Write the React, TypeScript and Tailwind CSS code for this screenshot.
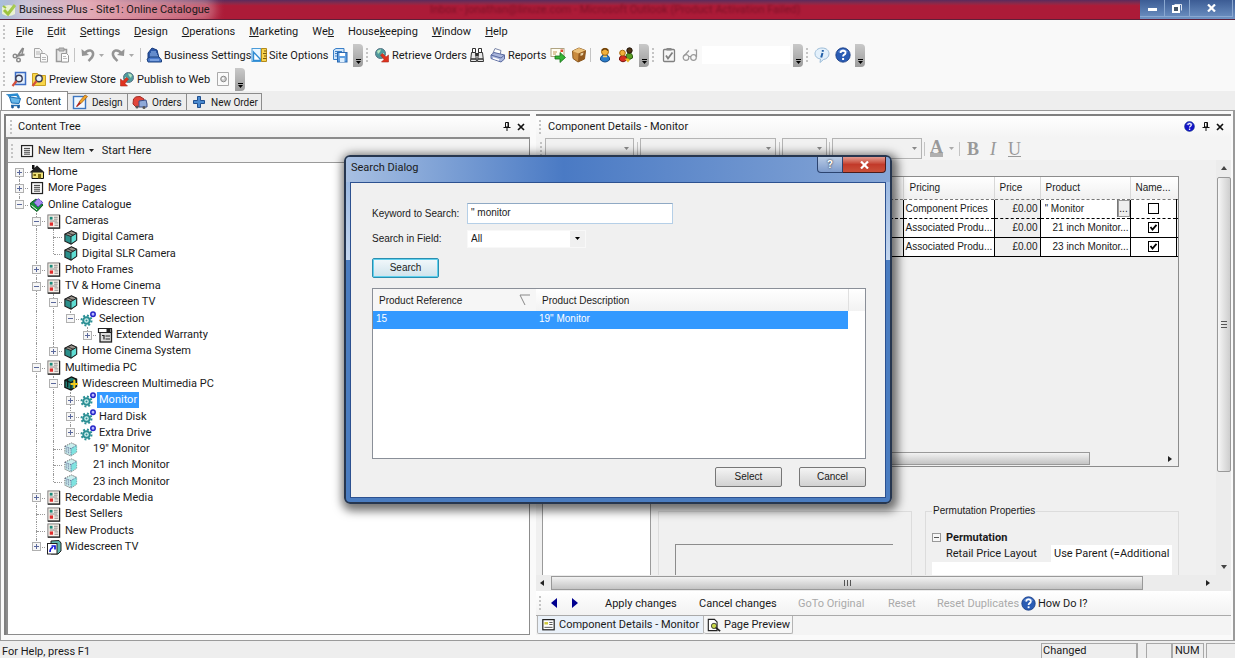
import type { ReactNode } from 'react';
import clsx from 'clsx';

const UI = 'font-["Roboto","Noto_Sans",sans-serif]';
const CLASSIC = 'font-["Liberation_Sans",Arial,sans-serif]';

/* ---------- icons ---------- */

const Svg = ({ children, size = 16, className }: { children: ReactNode; size?: number; className?: string }) => (
    <svg width={size} height={size} viewBox="0 0 16 16" fill="none" className={clsx('shrink-0', className)} aria-hidden="true">
        {children}
    </svg>
);

const CutIcon = () => (
    <Svg>
        <path d="M12 1 L6 10 M13.5 7.5 L5 9" stroke="#8a8a8a" strokeWidth="2" />
        <circle cx="4" cy="9" r="1.8" stroke="#8a8a8a" strokeWidth="1.4" />
        <circle cx="7.5" cy="13" r="1.8" stroke="#8a8a8a" strokeWidth="1.4" />
        <path d="M12.5 1 L10.5 9" stroke="#8a8a8a" strokeWidth="1.4" />
    </Svg>
);

const CopyIcon = () => (
    <Svg>
        <path d="M1.500 1.500h5l2.500 2.500v6.500h-7.500z" fill="#f4f4f4" stroke="#a5a5a5" />
        <path d="M3 5h4M3 7h4" stroke="#b5b5b5" />
        <path d="M7.500 6.500h4.500l2.500 2.500v6h-7z" fill="#fafafa" stroke="#a5a5a5" />
        <path d="M9 10.500h4M9 12.500h4" stroke="#b5b5b5" />
    </Svg>
);

const PasteIcon = () => (
    <Svg>
        <path d="M2.500 2.500h10v12h-10z" fill="#e8e8e8" stroke="#999" strokeWidth="1.500" />
        <path d="M5 1h5v3h-5z" fill="#bbb" stroke="#999" />
        <path d="M7.500 6.500h5l2 2v6.500h-7z" fill="#fcfcfc" stroke="#999" />
        <path d="M9 9.500h3M9 11.500h4" stroke="#bbb" />
    </Svg>
);

const UndoIcon = ({ flip }: { flip?: boolean }) => (
    <Svg className={flip ? '-scale-x-100' : ''}>
        <path d="M4 7 C8 1.500 14 3 13 8 C12.600 10.500 10.500 12 8.500 14" stroke="#959595" strokeWidth="2.600" />
        <path d="M1.500 2 L2 9 L9 8z" fill="#959595" />
    </Svg>
);

const BusinessIcon = () => (
    <Svg>
        <path d="M2 11 V6 L6 1 L11 3 L13 11z" fill="#2c58a8" stroke="#163a7c" />
        <path d="M5 5h5M4 7h7M4 9h8" stroke="#9cc0f0" />
        <path d="M1 12 L4 10 H13 L15.500 13 V15 H2z" fill="#4a7acb" stroke="#1d427f" />
        <path d="M4 13h9" stroke="#a8c6f4" />
    </Svg>
);

const SiteOptionsIcon = () => (
    <Svg>
        <rect x="1" y="1.500" width="9" height="13" fill="#eaf6ff" stroke="#4a9bd8" />
        <path d="M2.500 5 V13.500 H10.500z" fill="#fff" stroke="#2f8cd4" strokeWidth="1.400" />
        <path d="M10.500 1.500h5v13h-5z" fill="#f7d34c" stroke="#b38a1c" />
        <path d="M13 4h2.500M12 6.500h3.500M13 9h2.500M12 11.500h3.500" stroke="#7a5a0a" />
    </Svg>
);

const SaveAllIcon = () => (
    <Svg>
        <path d="M1.500 3 L4 1.500 H12 V12.500 H1.500z" fill="#cfe5fa" stroke="#3a7fc8" />
        <path d="M3 4.500h7M3 6.500h3M3 9h2" stroke="#3a7fc8" />
        <rect x="5.500" y="5.500" width="9.500" height="9.500" fill="#5e9ee0" stroke="#2a68b0" />
        <rect x="7.500" y="6" width="5.500" height="3" fill="#fff" />
        <rect x="8" y="11" width="4.500" height="4" fill="#dceefe" />
    </Svg>
);

const GlobeArrowIcon = ({ mirror }: { mirror?: boolean }) => (
    <Svg className={mirror ? '-scale-x-100' : ''}>
        <circle cx="6.500" cy="6.500" r="5" fill="#4f9a9c" stroke="#5a7688" />
        <path d="M3 4 Q5 2 7 2.500 L6 5 L4 7z M7 7 L10 6 L9 10z" fill="#b5e5c0" />
        <path d="M6.500 8 L8.500 6.500 L12 10 L14.500 8 V15 H7.500 L10 12.500z" fill="#e0321e" stroke="#a82a1c" strokeWidth=".6" />
    </Svg>
);

const BinocularsIcon = () => (
    <Svg>
        <path d="M3.500 1.500h3v4h-3zM9.500 1.500h3v4h-3z" fill="#fff" stroke="#333" />
        <path d="M2.500 5.500h4l1 9h-6zM9.500 5.500h4l1 9h-6z" fill="#e8e8e8" stroke="#333" />
        <path d="M6.500 6h3v3h-3z" fill="#333" />
        <path d="M2 12h5M9 12h5" stroke="#333" strokeWidth="1.500" />
    </Svg>
);

const PrinterIcon = () => (
    <Svg>
        <path d="M5 1.500 L11 3.500 L10 8 L3 6z" fill="#fff" stroke="#7b86a8" />
        <path d="M1 8 L4 5.500 L14.500 8 V12 L11 15 L1 11.500z" fill="#aab6dc" stroke="#5a6aa0" />
        <path d="M1 8 L11 11 L14.500 8" stroke="#5a6aa0" />
        <path d="M3 11 L9 13" stroke="#fff" strokeWidth="1.500" />
    </Svg>
);

const MailArrowIcon = () => (
    <Svg>
        <rect x="1" y="1.500" width="13" height="8" fill="#fffdf2" stroke="#b0a482" />
        <rect x="10.500" y="2.500" width="2.500" height="2.500" fill="#e04a30" />
        <path d="M3 5h4M3 7h3" stroke="#c09858" />
        <path d="M5 9h5V5.500l5.500 5L10 15.500V12H5z" fill="#36b536" stroke="#167016" strokeWidth=".8" />
    </Svg>
);

const BoxIcon = () => (
    <Svg>
        <path d="M1.500 4 L8 1 L14.500 3.500 L13.500 12 L7 15 L2 11.500z" fill="#c98b3e" stroke="#8a5a22" />
        <path d="M1.500 4 L7.500 6.500 L14.500 3.500 L8 1z" fill="#ecc27c" />
        <path d="M7.500 6.500 L14.500 3.500 L13.500 12 L7 15z" fill="#935a1f" />
        <path d="M9.500 6.500 L12.500 5.500 L12 8 L9.500 9z" fill="#e8d3aa" />
    </Svg>
);

const PersonIcon = () => (
    <Svg>
        <path d="M3.500 13 Q3 8 8 8 Q13 8 12.500 13 Q8 17 3.500 13z" fill="#2b7cc8" stroke="#134a86" />
        <circle cx="8" cy="4.800" r="3.500" fill="#f2b13a" stroke="#a86a10" />
        <path d="M4.800 3.500 Q8 0 11.200 3.500" stroke="#6b3f0c" strokeWidth="1.500" />
        <path d="M6 9.500h4" stroke="#f2d070" strokeWidth="1.500" />
    </Svg>
);

const PeopleIcon = () => (
    <Svg>
        <path d="M8 11 Q8 6 11 6 Q15 6 14.500 11 Q11 14 8 11z" fill="#5a9e24" stroke="#2c5c10" />
        <circle cx="11.500" cy="3.500" r="2.700" fill="#4e3316" stroke="#201408" />
        <path d="M1.500 13 Q1 8.500 5 8.500 Q9 8.500 8.500 13 Q5 16.500 1.500 13z" fill="#d62c20" stroke="#7a120c" />
        <circle cx="4.500" cy="6" r="2.800" fill="#f2b13a" stroke="#a86a10" />
        <path d="M7 12 Q10 10 12 13 L10 15.500z" fill="#e8b820" />
    </Svg>
);

const ClipCheckIcon = () => (
    <Svg>
        <rect x="2.500" y="2.500" width="11" height="12" rx="1" fill="#f6f6f6" stroke="#808080" strokeWidth="1.300" />
        <rect x="5.500" y="1" width="5" height="2.500" fill="#8a8a8a" />
        <path d="M5 8.500 L7 11.500 L11.500 5.500" stroke="#808080" strokeWidth="1.800" />
    </Svg>
);

const GlassesIcon = () => (
    <Svg>
        <circle cx="4" cy="10.500" r="2.800" stroke="#999" strokeWidth="1.200" />
        <circle cx="11.500" cy="10.500" r="2.800" stroke="#999" strokeWidth="1.200" />
        <path d="M6.500 9.500h2.500M2 9 L7 3.500M14.500 10 V3 H12.500" stroke="#999" strokeWidth="1.200" />
    </Svg>
);

const InfoIcon = () => (
    <Svg>
        <path d="M8 1 C12.500 1 15 3.500 15 6.800 C15 10 12.500 12 9.500 12.500 L6 15.500 L6.500 12 C3 11.500 1 9.500 1 6.800 C1 3.500 4 1 8 1z" fill="#e3f0fb" stroke="#9dbdd8" />
        <path d="M8.800 3v1.800M8.500 6 L7.200 10.500" stroke="#2461a8" strokeWidth="2" />
    </Svg>
);

const HelpIcon = ({ size = 16, color = '#2a5cb4' }: { size?: number; color?: string }) => (
    <Svg size={size}>
        <circle cx="8" cy="8" r="7.200" fill={color} stroke="#173a80" strokeWidth=".8" />
        <path d="M3.500 5 Q8 0 12.500 5" stroke="#8fb2ec" strokeWidth="1.200" opacity=".6" />
        <path d="M5.500 6 Q5.800 3.600 8.200 3.700 Q10.700 3.900 10.500 6 Q10.300 7.200 8.900 7.900 Q8.100 8.400 8.100 9.600" stroke="#fff" strokeWidth="1.900" />
        <rect x="7.100" y="11" width="2" height="2" fill="#fff" />
    </Svg>
);

const PreviewIcon = ({ folder }: { folder?: boolean }) => (
    <Svg>
        {folder ? (
            <path d="M1.500 2.500h5l1.500 2h6.500v10h-13z" fill="#f9d64a" stroke="#c8a024" />
        ) : (
            <path d="M4.500 1.500h10v12h-10z" fill="#e2eefc" stroke="#3b6cc4" strokeWidth="1.500" />
        )}
        <circle cx="8" cy="7.500" r="3.200" fill="#e9f3fb" stroke="#3a3a52" strokeWidth="1.400" />
        <path d="M5.500 10 L1.500 15" stroke="#d4503c" strokeWidth="2.200" />
    </Svg>
);

const PageGearIcon = () => (
    <Svg>
        <path d="M2.500 1.500h11v13h-11z" fill="#fafafa" stroke="#aaa" />
        <circle cx="8.500" cy="8" r="2.800" fill="#ccc" stroke="#888" />
        <circle cx="8" cy="7.500" r="1" fill="#fff" />
    </Svg>
);

const CartIcon = () => (
    <Svg>
        <path d="M0.500 1.500 L4 2.500 L6 10" stroke="#1c6fb0" strokeWidth="1.300" />
        <path d="M3.500 4 L14.500 5.500 L13 10.500 L5.500 10z" fill="#67b7ea" stroke="#1c6fb4" />
        <path d="M2 2.500 L11 1.500 L13 5" stroke="#2a8bd0" strokeWidth="2.500" />
        <path d="M5 12.500h9" stroke="#2371b6" strokeWidth="1.500" />
        <circle cx="6.500" cy="14" r="1.400" fill="#1b5898" />
        <circle cx="12.500" cy="14" r="1.400" fill="#1b5898" />
    </Svg>
);

const DesignIcon = () => (
    <Svg>
        <rect x="1.500" y="2.500" width="12" height="12" fill="#f4faff" stroke="#3d76c0" strokeWidth="1.400" />
        <path d="M13 1 L15.500 2.500 L9 9.500 L7 8z" fill="#f0a428" stroke="#a05a10" strokeWidth=".7" />
        <path d="M7 8 L9 9.500 L5 13 L4 12.500z" fill="#b02418" />
    </Svg>
);

const OrdersIcon = () => (
    <Svg>
        <path d="M1.500 5 Q3 2 8 2.500 L12 5 V12 L4 13 L1 10z" fill="#e2453a" stroke="#a02c24" />
        <path d="M7 7 L14 6 L15 10 V13 H7z" fill="#8ea8d8" stroke="#3c4f86" />
        <circle cx="5" cy="13" r="1.500" fill="#555" />
        <circle cx="12" cy="13.500" r="1.500" fill="#555" />
    </Svg>
);

const PlusIcon = () => (
    <Svg>
        <path d="M6.500 2.500h3v4h4v3h-4v4h-3v-4h-4v-3h4z" fill="#4a8ad0" stroke="#1f4f90" />
    </Svg>
);

const PageIcon = () => (
    <Svg size={14}>
        <rect x="1.800" y="1.800" width="12.500" height="12.500" fill="#fff" stroke="#222" strokeWidth="1.400" />
        <path d="M4.500 5h7M4.500 7.200h7M4.500 9.400h7M4.500 11.600h7" stroke="#333" strokeWidth="1.100" />
    </Svg>
);

const PinIcon = () => (
    <svg width="8" height="9" viewBox="0 0 8 9" fill="none" aria-hidden="true">
        <path d="M2.500 0.500h3v4.500h-3zM5 0.500v4.500M0.500 5.500h7M4 5.500v3.500" stroke="#111" />
    </svg>
);

const CloseIcon = () => (
    <svg width="8" height="8" viewBox="0 0 8 8" fill="none" aria-hidden="true">
        <path d="M1 1 L7 7 M7 1 L1 7" stroke="#111" strokeWidth="1.700" />
    </svg>
);

const Caret = ({ color = '#222' }: { color?: string }) => (
    <svg width="5" height="3" viewBox="0 0 5 3" className="shrink-0" aria-hidden="true">
        <path d="M0 0h5L2.500 3z" fill={color} />
    </svg>
);

const treeIcons: Record<string, ReactNode> = {
    home: (
        <Svg>
            <path d="M3 8 V14.500 H14.500 V8 L8.500 3z" fill="#f0e27a" stroke="#111" />
            <path d="M0.500 8.500 L8 1.500 L15.500 8.500z" fill="#222" />
            <path d="M3 1h2.500v4H3z" fill="#111" />
            <path d="M9 10h3v4.500h-3zM4.500 10h2.500v2h-2.500z" fill="#7a6a10" />
        </Svg>
    ),
    page: <PageIcon />,
    book: (
        <Svg>
            <path d="M1.500 6 L7 2 L14 8 L8 14.500 L2 10z" fill="#17913a" stroke="#0c5a20" />
            <path d="M5 5.500 L9 1.500 L14 5.500 L9 10z" fill="#a98cf0" stroke="#4a2cb8" strokeDasharray="2 1" />
            <path d="M2.500 8.500 L8 13" stroke="#fff" />
        </Svg>
    ),
    section: (
        <Svg size={15}>
            <rect x="2" y="1" width="12.500" height="14" fill="#f6efe8" stroke="#777" />
            <path d="M14.500 1v14H2" stroke="#222" strokeWidth="1.300" />
            <rect x="4" y="3" width="3" height="3" fill="#1c8a7a" />
            <rect x="4" y="9" width="3.500" height="3.500" fill="#e02c2c" />
            <path d="M8.500 3.500h4M8.500 5.500h4M9 9.500h4M9 12h4M4 7.500h8" stroke="#888" />
        </Svg>
    ),
    product: (
        <Svg size={15}>
            <path d="M2 4.500 L9 1 L14.500 3.500 V11 L8.500 15 L2 12z" fill="#2a8f8b" stroke="#222" strokeWidth="1.200" />
            <path d="M2 4.500 L8.500 7 L14.500 3.500 L9 1z" fill="#9a948c" stroke="#222" />
            <path d="M8.500 7v8l6-4V3.500z" fill="#5fdcd2" stroke="#222" />
            <path d="M5 3 L11 5.500" stroke="#333" />
        </Svg>
    ),
    productPlus: (
        <Svg size={15}>
            <path d="M2 4.500 L9 1 L14.500 3.500 V11 L8.500 15 L2 12z" fill="#1f7e74" stroke="#111" strokeWidth="1.400" />
            <path d="M2 4.500 L8.500 7 L14.500 3.500M8.500 7v8M5 3v9" stroke="#111" strokeWidth="1.200" />
            <path d="M12 4v9M8 8.500h8" stroke="#f2c81c" strokeWidth="2" />
        </Svg>
    ),
    ghost: (
        <Svg size={15}>
            <path d="M2 4.500 L9 1 L14.500 3.500 V11 L8.500 15 L2 12z" fill="#c9eeee" stroke="#666" strokeDasharray="1.500 1" />
            <path d="M8.500 7v7.500l6-4V3.500z" fill="#7fe3e0" />
            <path d="M2 4.500 L8.500 7 L14.500 3.500M8.500 7v8M4 6v6M6 7v6" stroke="#558" strokeDasharray="1 1" />
        </Svg>
    ),
    gear: (
        <Svg>
            <circle cx="6.500" cy="9.500" r="5" stroke="#2b8f94" strokeWidth="2" strokeDasharray="1.900 2" />
            <circle cx="6.500" cy="9.500" r="3.300" stroke="#2b8f94" strokeWidth="2" fill="#d2f1ee" />
            <circle cx="6.500" cy="9.500" r="1" fill="#2b8f94" />
            <circle cx="13" cy="3.200" r="2.200" stroke="#2424c8" strokeWidth="1.500" fill="#b9b9ff" />
        </Svg>
    ),
    choice: (
        <Svg>
            <rect x="3" y="4" width="11.500" height="11" fill="#ddd" stroke="#222" strokeWidth="1.300" />
            <path d="M1.500 1.500h13v4h-13z" fill="#fff" stroke="#222" strokeWidth="1.200" />
            <path d="M9.500 2h4v3h-4z" fill="#222" />
            <path d="M5 8.500h2v4M8.500 9h4.500M8.500 12h4.500" stroke="#222" strokeWidth="1.200" />
        </Svg>
    ),
    shortcut: (
        <Svg>
            <path d="M5 2 L13 1.500 L15 4 V12 L12 15 H5z" fill="#5fb8b0" stroke="#222" />
            <rect x="1.500" y="4.500" width="9.500" height="10.500" fill="#fff" stroke="#222" />
            <path d="M4 13 Q4 9 7 8.500 M5.500 7h3.500v3.500" stroke="#1414d8" strokeWidth="1.700" />
        </Svg>
    ),
};

/* ---------- content tree ---------- */

type TreeNode = {
    label: string;
    icon: string;
    closed?: boolean;
    selected?: boolean;
    children?: TreeNode[];
};

const tree: TreeNode[] = [
    { label: 'Home', icon: 'home', closed: true },
    { label: 'More Pages', icon: 'page', closed: true },
    {
        label: 'Online Catalogue', icon: 'book', children: [
            {
                label: 'Cameras', icon: 'section', children: [
                    { label: 'Digital Camera', icon: 'product' },
                    { label: 'Digital SLR Camera', icon: 'product' },
                ],
            },
            { label: 'Photo Frames', icon: 'section', closed: true },
            {
                label: 'TV & Home Cinema', icon: 'section', children: [
                    {
                        label: 'Widescreen TV', icon: 'product', children: [
                            {
                                label: 'Selection', icon: 'gear', children: [
                                    { label: 'Extended Warranty', icon: 'choice', closed: true },
                                ],
                            },
                        ],
                    },
                    { label: 'Home Cinema System', icon: 'product', closed: true },
                ],
            },
            {
                label: 'Multimedia PC', icon: 'section', children: [
                    {
                        label: 'Widescreen Multimedia PC', icon: 'productPlus', children: [
                            { label: 'Monitor', icon: 'gear', closed: true, selected: true },
                            { label: 'Hard Disk', icon: 'gear', closed: true },
                            { label: 'Extra Drive', icon: 'gear', closed: true },
                        ],
                    },
                    { label: '19" Monitor', icon: 'ghost' },
                    { label: '21 inch Monitor', icon: 'ghost' },
                    { label: '23 inch Monitor', icon: 'ghost' },
                ],
            },
            { label: 'Recordable Media', icon: 'section', closed: true },
            { label: 'Best Sellers', icon: 'section' },
            { label: 'New Products', icon: 'section' },
            { label: 'Widescreen TV', icon: 'shortcut', closed: true },
        ],
    },
];

type Row = { node: TreeNode; guides: boolean[]; last: boolean; first: boolean };

const flatten = (nodes: TreeNode[], guides: boolean[] = []): Row[] =>
    nodes.flatMap((node, i) => {
        const last = i === nodes.length - 1;
        const row = { node, guides, last, first: guides.length === 0 && i === 0 };
        return [row, ...flatten(node.children ?? [], [...guides, !last])];
    });

const TreeRow = ({ node, guides, last, first }: Row) => (
    <li className="flex items-stretch" role="treeitem" aria-selected={!!node.selected}>
        {guides.map((on, i) => (
            <span key={i} className="flex w-[17px] justify-center">
                <span className={clsx('w-px', on && 'border-l border-dotted border-[#999]')} />
            </span>
        ))}
        <span className="grid w-[17px] grid-cols-[8px_1px_8px] grid-rows-2">
            <span className={clsx('col-start-2 row-start-1', !first && 'border-l border-dotted border-[#999]')} />
            <span className={clsx('col-start-2 row-start-2', !last && 'border-l border-dotted border-[#999]')} />
            <span className="col-start-3 row-start-2 border-t border-dotted border-[#999]" />
            {(node.children || node.closed) && (
                <button
                    aria-label={node.children ? `Collapse ${node.label}` : `Expand ${node.label}`}
                    className="z-10 col-span-3 col-start-1 row-span-2 row-start-1 place-self-center"
                >
                    <svg width="9" height="9" viewBox="0 0 9 9" className="block" aria-hidden="true">
                        <rect x=".5" y=".5" width="8" height="8" fill="#f6f6f6" stroke="#b0b0b0" />
                        <path d={node.children ? 'M2 4.500h5' : 'M2 4.500h5M4.500 2v5'} stroke="#5a689c" />
                    </svg>
                </button>
            )}
        </span>
        <span className="flex w-[17px] items-center justify-center">{treeIcons[node.icon]}</span>
        <span
            className={clsx(
                'flex items-center whitespace-nowrap px-[2px]',
                node.icon === 'ghost' ? 'ml-[12px]' : 'ml-px',
                node.selected && 'bg-[#3399ff] text-white'
            )}
        >
            {node.label}
        </span>
    </li>
);

/* ---------- toolbar parts ---------- */

const Grip = () => <span className="mx-[3px] h-[14px] w-px shrink-0 border-l-2 border-dotted border-[#c4c4c4]" />;
const Sep = () => <span className="mx-[2px] h-[14px] w-px shrink-0 bg-[#c4c4c4]" />;

const Tool = ({ icon, label, text, className }: { icon?: ReactNode; label: string; text?: boolean; className?: string }) => (
    <button aria-label={label} className={clsx('flex shrink-0 items-center gap-[2px] whitespace-nowrap', className)}>
        {icon}
        {text && label}
    </button>
);

const Overflow = () => (
    <button
        aria-label="Toolbar options"
        className="flex h-[23px] w-[10px] shrink-0 flex-col items-center justify-end gap-px rounded-r-sm bg-linear-to-b from-[#c9c9c9] to-[#9c9c9c] pb-[3px]"
    >
        <span className="h-px w-[5px] bg-black" />
        <Caret color="#000" />
    </button>
);

const menus = ['_File', '_Edit', '_Settings', '_Design', '_Operations', '_Marketing', 'We_b', 'House_keeping', '_Window', '_Help'];

const TitleBar = () => (
    <header className="relative flex h-[20px] shrink-0 items-center overflow-hidden border-b border-[#5c2038] bg-linear-to-b from-[#5b2a5c] via-[#ac1b38] via-30% to-[#ac1b38]">
        <div className="absolute inset-0 bg-linear-to-r from-[#a9bfdc] via-[#d98c9c] via-[90px] to-transparent to-[225px]" />
        <span className="absolute left-[430px] whitespace-nowrap text-[11px] text-[#7c1228] blur-[1px]">
            Inbox - jonathan@linuze.com - Microsoft Outlook (Product Activation Failed)
        </span>
        <Svg className="relative ml-px">
            <path d="M1 5 Q8 1 14 5 V12 Q8 16 1 12z" fill="#e8f0d0" />
            <path d="M3 8 L7 12 L14 3" stroke="#9cc43c" strokeWidth="3" />
            <path d="M2 4 L5 6" stroke="#9cc43c" strokeWidth="2" />
        </Svg>
        <h1 className="relative ml-[2px] rounded-full bg-white/25 shadow-[0_0_8px_6px_rgba(255,255,255,0.25)]">Business Plus - Site1: Online Catalogue</h1>
        <div className="relative ml-auto flex h-full w-[95px] items-start bg-linear-to-b from-[#3c5c94] to-[#6f93c4]">
            <button aria-label="Minimize" className="flex h-[17px] w-[25px] items-center justify-center border-r border-b border-[#8aa8d0]">
                <span className="mt-[3px] h-[3px] w-[9px] bg-white" />
            </button>
            <button aria-label="Restore" className="flex h-[17px] w-[25px] items-center justify-center border-r border-b border-[#8aa8d0]">
                <svg width="10" height="9" viewBox="0 0 10 9" fill="none" aria-hidden="true">
                    <path d="M2.500 0.500h7v6" stroke="#dfe6f0" />
                    <rect x="1" y="2" width="6" height="6" fill="#456" stroke="#fff" strokeWidth="2" />
                </svg>
            </button>
            <button aria-label="Close" className="flex h-[17px] w-[43px] items-center justify-center border-r border-b border-[#8aa8d0]">
                <svg width="9" height="8" viewBox="0 0 9 8" aria-hidden="true">
                    <path d="M1 0.500 L8 7.500 M8 0.500 L1 7.500" stroke="#fff" strokeWidth="2.200" />
                </svg>
            </button>
        </div>
    </header>
);

const MenuBar = () => (
    <nav className="flex h-[23px] shrink-0 items-center">
        <Grip />
        <ul className="ml-[8px] flex gap-[14px]">
            {menus.map(m => {
                const [before, rest] = m.split('_');
                return (
                    <li key={m}>
                        <button>{before}<u>{rest[0]}</u>{rest.slice(1)}</button>
                    </li>
                );
            })}
        </ul>
    </nav>
);

const Toolbars = () => (
    <div className="flex h-[48px] shrink-0 flex-col">
        <div className="flex h-[24px] items-center">
            <Grip />
            <Tool icon={<CutIcon />} label="Cut" className="ml-[3px] w-[22px]" />
            <Tool icon={<CopyIcon />} label="Copy" className="w-[21px]" />
            <Tool icon={<PasteIcon />} label="Paste" className="w-[18px]" />
            <Sep />
            <Tool icon={<UndoIcon />} label="Undo" className="ml-[3px] w-[19px]" />
            <Caret color="#aaa" />
            <Tool icon={<UndoIcon flip />} label="Redo" className="ml-[6px] w-[19px]" />
            <Caret color="#aaa" />
            <span className="w-[4px]" />
            <Sep />
            <Tool icon={<BusinessIcon />} label="Business Settings" text className="ml-[3px] w-[105px]" />
            <Tool icon={<SiteOptionsIcon />} label="Site Options" text className="w-[81px]" />
            <Tool icon={<SaveAllIcon />} label="Save" className="w-[21px]" />
            <Overflow />
            <Grip />
            <Tool icon={<GlobeArrowIcon />} label="Retrieve Orders" text className="ml-[3px] w-[95px]" />
            <Tool icon={<BinocularsIcon />} label="Find" className="w-[21px]" />
            <Tool icon={<PrinterIcon />} label="Reports" text className="w-[60px]" />
            <Tool icon={<MailArrowIcon />} label="Send mail" className="w-[21px]" />
            <Tool icon={<BoxIcon />} label="Stock" className="w-[17px]" />
            <Sep />
            <Tool icon={<PersonIcon />} label="Customer" className="ml-[4px] w-[21px]" />
            <Tool icon={<PeopleIcon />} label="Customers" className="w-[21px]" />
            <Overflow />
            <Grip />
            <Tool icon={<ClipCheckIcon />} label="Check" className="ml-[4px] w-[21px]" />
            <Tool icon={<GlassesIcon />} label="Look up" className="w-[20px]" />
            <input aria-label="Quick search" className="mr-[3px] h-[18px] w-[88px] shrink-0 bg-white px-1 outline-none" />
            <Overflow />
            <Grip />
            <Tool icon={<InfoIcon />} label="Information" className="ml-[3px] w-[21px]" />
            <Tool icon={<HelpIcon />} label="Help" className="w-[20px]" />
            <Overflow />
        </div>
        <div className="flex h-[24px] items-center">
            <Grip />
            <Tool icon={<PreviewIcon />} label="Preview page" className="ml-[3px] w-[20px]" />
            <Tool icon={<PreviewIcon folder />} label="Preview Store" text className="w-[88px]" />
            <Tool icon={<GlobeArrowIcon mirror />} label="Publish to Web" text className="w-[96px]" />
            <Tool icon={<PageGearIcon />} label="Page settings" className="w-[20px]" />
            <Overflow />
        </div>
    </div>
);

const mainTabs = [
    { label: 'Content', icon: <CartIcon />, width: 'w-[67px]' },
    { label: 'Design', icon: <DesignIcon />, width: 'w-[60px]' },
    { label: 'Orders', icon: <OrdersIcon />, width: 'w-[59px]' },
    { label: 'New Order', icon: <PlusIcon />, width: 'w-[75px]' },
];

const MainTabs = () => (
    <div role="tablist" className="flex h-[19px] shrink-0 items-end bg-[#eeeeee] pl-px text-[10px]">
        {mainTabs.map((t, i) => (
            <button
                key={t.label}
                role="tab"
                aria-selected={i === 0}
                className={clsx(
                    'flex items-center gap-[4px] whitespace-nowrap border-t border-r border-[#8c8c8c] pl-[4px]',
                    t.width,
                    i === 0 ? 'h-[19px] border-l bg-white' : 'h-[17px] bg-[#ededed]'
                )}
            >
                {t.icon}
                {t.label}
            </button>
        ))}
    </div>
);

const ContentTree = () => (
    <section className="flex w-[526px] shrink-0 flex-col border-t-2 border-l-2 border-[#808080]">
        <div className="flex h-[21px] shrink-0 items-center bg-linear-to-b from-white to-[#f1f1f1] pl-px">
            <Grip />
            <h2 className="ml-[3px]">Content Tree</h2>
            <button aria-label="Pin" className="ml-auto"><PinIcon /></button>
            <button aria-label="Close panel" className="mr-[5px] ml-[6px]"><CloseIcon /></button>
        </div>
        <div className="flex min-h-0 flex-1 flex-col border-t-2 border-r border-b border-l-2 border-[#8c8c8c]">
            <div className="flex h-[24px] shrink-0 items-center border-b border-[#9a9a9a] bg-[#f4f4f4]">
                <Grip />
                <button className="ml-[4px] flex items-center gap-[4px]">
                    <PageIcon />
                    New Item
                    <Caret />
                </button>
                <button className="ml-[8px]">Start Here</button>
            </div>
            <div className="min-h-0 flex-1 overflow-hidden bg-white">
                <ul role="tree" className="mt-px ml-[3px] grid h-[391px] auto-rows-fr leading-[14px]">
                    {flatten(tree).map((row, i) => <TreeRow key={i} {...row} />)}
                </ul>
            </div>
        </div>
    </section>
);

/* ---------- component details ---------- */

const Combo = ({ label, className }: { label: string; className: string }) => (
    <span className={clsx('relative flex h-[21px] shrink-0 items-center', className)}>
        <select aria-label={label} disabled className="h-full w-full appearance-none border border-[#b4b4b4] bg-[#f1f1f1] opacity-100" />
        <span className="absolute right-[5px]"><Caret color="#888" /></span>
    </span>
);

const FormatBar = () => (
    <div className="flex h-[23px] shrink-0 items-center bg-[#f4f4f4] pl-px text-[#999]">
        <Grip />
        <Combo label="Style" className="w-[89px]" />
        <span className="w-px" /><Sep />
        <Combo label="Font" className="w-[136px]" />
        <span className="w-px" /><Sep />
        <Combo label="Size" className="w-[45px]" />
        <Sep />
        <Combo label="Format" className="w-[90px]" />
        <Sep />
        <div className='flex items-center font-["Liberation_Serif",serif] text-[18px] leading-[20px]'>
            <button aria-label="Text colour" className="mr-[6px] ml-[3px] h-[17px] border-b-4 border-[#b0b0b0] font-bold leading-[15px]">A</button>
            <Caret color="#aaa" />
            <span className="w-[3px]" /><Sep />
            <button className="ml-[5px] w-[23px] text-left font-bold">B</button>
            <button className="w-[18px] text-left italic">I</button>
            <button className="underline">U</button>
        </div>
    </div>
);

const components = [
    { pricing: 'Component Prices', price: '£0.00', product: '" Monitor', named: false },
    { pricing: 'Associated Produ...', price: '£0.00', product: '21 inch Monitor...', named: true },
    { pricing: 'Associated Produ...', price: '£0.00', product: '23 inch Monitor...', named: true },
];

const CheckBox = ({ label, checked }: { label: string; checked: boolean }) => (
    <span className="relative inline-flex">
        <input type="checkbox" aria-label={label} defaultChecked={checked} className="peer size-[11px] appearance-none border border-black bg-white" />
        <svg width="11" height="11" viewBox="0 0 11 11" className="pointer-events-none absolute hidden peer-checked:block" aria-hidden="true">
            <path d="M2.500 5 L4.500 7.500 L8.500 2.800" stroke="#000" strokeWidth="1.800" fill="none" />
        </svg>
    </span>
);

const ComponentGrid = () => (
    <div className={clsx('flex h-[291px] flex-col border border-[#8c8c8c]', CLASSIC)}>
        <table className="w-full table-fixed border-collapse text-[10px] leading-[12px]">
            <colgroup>
                <col />
                <col className="w-[91px]" />
                <col className="w-[46px]" />
                <col className="w-[90px]" />
                <col className="w-[46px]" />
                <col className="w-[2px]" />
            </colgroup>
            <thead>
                <tr className="h-[22px] bg-linear-to-b from-white to-[#f0f0f0] text-left">
                    <th />
                    <th className="border-l border-[#d8d8d8] pl-[6px] font-normal">Pricing</th>
                    <th className="border-l border-[#d8d8d8] pl-[5px] font-normal">Price</th>
                    <th className="border-l border-[#d8d8d8] pl-[5px] font-normal">Product</th>
                    <th className="border-l border-[#d8d8d8] pl-[5px] font-normal">Name...</th>
                    <th />
                </tr>
            </thead>
            <tbody>
                {components.map((c, i) => (
                    <tr key={c.product} className={clsx('h-[19px] border-b border-black', i === 0 && 'border-t border-t-[#777] border-dashed')}>
                        <td />
                        <td className="whitespace-nowrap border-x border-solid border-black bg-white pl-[2px]">{c.pricing}</td>
                        <td className="border-x border-solid border-black pr-[2px] text-right">{c.price}</td>
                        <td className="whitespace-nowrap border-x border-solid border-black bg-white p-0">
                            {i === 0 ? (
                                <span className="flex h-[17px] items-stretch">
                                    <input aria-label="Product" defaultValue={c.product} className="min-w-0 flex-1 border-r border-[#777] pl-[4px] outline-none" />
                                    <button aria-label="Browse products" className="w-[12px] border border-[#999] bg-[#eee] leading-[10px]">...</button>
                                </span>
                            ) : (
                                <span className="pl-[12px]">{c.product}</span>
                            )}
                        </td>
                        <td className="border-x border-solid border-black bg-white p-0 text-center align-middle leading-0">
                            <CheckBox label={`Name ${c.product}`} checked={c.named} />
                        </td>
                        <td />
                    </tr>
                ))}
            </tbody>
        </table>
        <div className="mt-auto flex h-[15px] items-center bg-[#f0f0f0] pr-[6px]">
            <span className="h-[13px] flex-1 border border-[#999] bg-linear-to-b from-[#f2f2f2] to-[#c4c4c4]" />
            <span className="w-[78px]" />
            <svg width="4" height="6" viewBox="0 0 4 6" aria-hidden="true"><path d="M0 0v6L4 3z" fill="#222" /></svg>
        </div>
    </div>
);

const VerticalScroll = () => (
    <div className="flex w-[15px] shrink-0 flex-col items-center bg-[#ececec] pt-[6px] pb-[6px]">
        <svg width="6" height="4" viewBox="0 0 6 4" aria-hidden="true"><path d="M0 4h6L3 0z" fill="#444" /></svg>
        <div className="mt-[7px] flex h-[295px] w-[14px] flex-col items-center justify-center gap-px rounded-xs border border-[#999] bg-linear-to-r from-[#f6f6f6] to-[#cecece]">
            <span className="h-px w-[6px] bg-[#555]" />
            <span className="my-px h-px w-[6px] bg-[#555]" />
            <span className="h-px w-[6px] bg-[#555]" />
        </div>
        <svg width="6" height="4" viewBox="0 0 6 4" className="mt-auto" aria-hidden="true"><path d="M0 0h6L3 4z" fill="#444" /></svg>
    </div>
);

const DetailsBody = () => (
    <div className="flex min-h-0 flex-1 overflow-hidden bg-[#f0f0f0]">
        <div className="flex min-w-0 flex-1 overflow-hidden pl-[6px]">
            <div className="w-[109px] shrink-0 border-x border-[#9a9a9a] bg-white" />
            <div className="ml-[7px] flex w-[521px] shrink-0 flex-col">
                <div className="mt-[16px] pl-[18px]"><ComponentGrid /></div>
                <div className="mt-[36px] flex flex-1 items-stretch">
                    <div className="mt-[8px] w-[254px] border-x border-t border-[#dcdcdc] pt-[32px] pr-[18px] pl-[16px]">
                        <div className="h-full border-t border-l border-[#8c8c8c]" />
                    </div>
                    <fieldset className="ml-[13px] min-w-0 flex-1 border-x border-t border-[#dcdcdc] px-[6px]">
                        <legend className={clsx('px-px text-[10px] leading-[16px]', CLASSIC)}>Permutation Properties</legend>
                        <div className="mt-[10px] flex h-[16px] items-center gap-[5px] font-bold">
                            <svg width="9" height="9" viewBox="0 0 9 9" aria-hidden="true">
                                <rect x=".5" y=".5" width="8" height="8" fill="#f6f6f6" stroke="#999" />
                                <path d="M2 4.500h5" stroke="#555" />
                            </svg>
                            Permutation
                        </div>
                        <div className="flex h-[17px] items-center pl-[14px]">
                            <label htmlFor="retail" className="w-[105px] shrink-0 whitespace-nowrap">Retail Price Layout</label>
                            <input id="retail" readOnly value="Use Parent (=Additional" className="h-[17px] min-w-0 flex-1 bg-white pl-[3px] outline-none" />
                        </div>
                        <div className="h-[40px] bg-white" />
                    </fieldset>
                </div>
            </div>
        </div>
        <VerticalScroll />
    </div>
);

const ComponentDetails = () => (
    <section className="ml-[6px] flex min-w-0 flex-1 flex-col border-t-2 border-[#808080]">
        <div className="flex h-[21px] shrink-0 items-center bg-linear-to-b from-white to-[#f4f4f4]">
            <Grip />
            <h2 className="ml-[4px]">Component Details - Monitor</h2>
            <button aria-label="Panel help" className="ml-auto"><HelpIcon size={11} color="#1212c8" /></button>
            <button aria-label="Pin" className="ml-[7px]"><PinIcon /></button>
            <button aria-label="Close panel" className="mr-[7px] ml-[6px]"><CloseIcon /></button>
        </div>
        <FormatBar />
        <DetailsBody />
        <div className="flex h-[16px] shrink-0 items-center bg-[#ececec] pl-[4px]">
            <svg width="4" height="6" viewBox="0 0 4 6" aria-hidden="true"><path d="M4 0v6L0 3z" fill="#222" /></svg>
            <div className="ml-[7px] flex h-[14px] flex-1 items-center justify-center gap-px border border-[#999] bg-linear-to-b from-[#f2f2f2] to-[#c4c4c4]">
                <span className="h-[6px] w-px bg-[#555]" />
                <span className="mx-px h-[6px] w-px bg-[#555]" />
                <span className="h-[6px] w-px bg-[#555]" />
            </div>
            <svg width="4" height="6" viewBox="0 0 4 6" className="mr-[21px] ml-[63px]" aria-hidden="true"><path d="M0 0v6L4 3z" fill="#222" /></svg>
        </div>
        <div className="flex h-[25px] shrink-0 items-center border-b border-[#aaa] bg-linear-to-b from-white to-[#f2f2f2]">
            <Grip />
            <button aria-label="Previous" className="ml-[7px]">
                <svg width="6" height="10" viewBox="0 0 6 10" aria-hidden="true"><path d="M6 0v10L0 5z" fill="#000090" /></svg>
            </button>
            <button aria-label="Next" className="ml-[15px]">
                <svg width="6" height="10" viewBox="0 0 6 10" aria-hidden="true"><path d="M0 0v10L6 5z" fill="#000090" /></svg>
            </button>
            <button className="ml-[27px] w-[94px] text-left">Apply changes</button>
            <button className="w-[99px] text-left">Cancel changes</button>
            <button disabled className="w-[90px] text-left text-[#aaa]">GoTo Original</button>
            <button disabled className="w-[49px] text-left text-[#aaa]">Reset</button>
            <button disabled className="w-[84px] whitespace-nowrap text-left text-[#aaa]">Reset Duplicates</button>
            <Tool icon={<HelpIcon size={15} />} label="How Do I?" text />
        </div>
        <div role="tablist" className="flex h-[19px] shrink-0 items-start bg-[#f4f4f4] pl-px">
            <button role="tab" aria-selected className="flex h-[18px] w-[167px] items-center gap-[4px] whitespace-nowrap rounded-b-xs border-x border-b border-[#b4b4b4] bg-[#eaf1f9] pl-[4px]">
                <Svg size={13}>
                    <rect x="1" y="2" width="14" height="12.500" fill="#fff" stroke="#222" strokeWidth="1.500" />
                    <path d="M3 5h4.500v3H3z" fill="#cfc93a" />
                    <path d="M9 5.500h4M9 8h4M3 11.500h10" stroke="#333" />
                </Svg>
                Component Details - Monitor
            </button>
            <button role="tab" aria-selected={false} className="flex h-[18px] w-[89px] items-center gap-[3px] whitespace-nowrap rounded-b-xs border-r border-b border-[#b4b4b4] bg-[#f6f6f6] pl-[3px]">
                <Svg size={14}>
                    <path d="M1.500 1.500h7l3 3v10h-10z" fill="#fff" stroke="#222" strokeWidth="1.300" />
                    <circle cx="8" cy="9" r="3" fill="#c9d84a" stroke="#333" />
                    <path d="M10 11 L15 15" stroke="#222" strokeWidth="2" />
                </Svg>
                Page Preview
            </button>
        </div>
    </section>
);

const StatusBar = () => (
    <footer className="flex h-[17px] shrink-0 items-end bg-[#eeeeee] leading-[13px]">
        <span className="flex-1 pl-[2px]">For Help, press F1</span>
        <span className="h-[15px] w-[97px] border-t border-r-2 border-l border-[#a8a8a8] pl-px">Changed</span>
        <span className="ml-[8px] h-[15px] w-[26px] border-t border-r border-l border-[#a8a8a8]" />
        <span className="h-[15px] w-[32px] border-t border-r border-l border-[#a8a8a8] pl-[2px]">NUM</span>
        <span className="ml-[2px] h-[15px] w-[29px] border-t border-l border-[#a8a8a8]" />
    </footer>
);

/* ---------- search dialog ---------- */

const DialogButton = ({ children, primary }: { children: ReactNode; primary?: boolean }) => (
    <button
        className={clsx(
            'h-[20px] w-[67px] rounded-xs border bg-linear-to-b leading-[16px]',
            primary
                ? 'border-[#2a8fb0] from-[#f2f8fb] to-[#cfe3ec] shadow-[inset_0_0_0_1px_#5fd0ee]'
                : 'border-[#777] from-[#f4f4f4] to-[#d2d2d2]'
        )}
    >
        {children}
    </button>
);

const SearchDialog = () => (
    <div
        role="dialog"
        aria-labelledby="dialog-title"
        className="absolute top-[155px] left-[344px] flex h-[349px] w-[548px] flex-col rounded-md border-2 border-[#26364f] bg-linear-to-b from-[#8fb0de] via-[#c4d6ee] via-30% to-[#4a7cc0] to-30% px-[4px] pb-[4px] shadow-[2px_3px_10px_4px_rgba(0,0,0,0.55)]"
    >
        <div className="-mx-[4px] flex h-[25px] shrink-0 items-start rounded-t-sm bg-linear-to-r from-[#a8c0e2] via-[#4a7ac4] via-40% to-[#86a6d6]">
            <h2 id="dialog-title" className="ml-[5px] mt-[3px]">Search Dialog</h2>
            <button aria-label="Help" className="ml-auto flex h-[16px] w-[26px] items-center justify-center rounded-bl-sm border border-t-0 border-[#2c4470] bg-linear-to-b from-[#b9cbe4] to-[#7f9ccc] text-[11px] font-bold text-white [text-shadow:0_0_2px_#000]">?</button>
            <button aria-label="Close" className="mr-[4px] flex h-[16px] w-[43px] items-center justify-center rounded-br-sm border border-t-0 border-l-0 border-[#4a1c1c] bg-linear-to-b from-[#e29a90] via-[#c23a2a] via-50% to-[#c9503a]">
                <svg width="9" height="8" viewBox="0 0 9 8" aria-hidden="true">
                    <path d="M1 0.500 L8 7.500 M8 0.500 L1 7.500" stroke="#fff" strokeWidth="2.200" />
                </svg>
            </button>
        </div>
        <form onSubmit={e => e.preventDefault()} className={clsx('flex min-h-0 flex-1 flex-col border border-[#2c5190] bg-[#f0f0f0] pt-[20px] pr-[19px] pb-[10px] pl-[21px] text-[10px]', CLASSIC)}>
            <div className="flex h-[21px] items-center">
                <label htmlFor="keyword" className="w-[95px]">Keyword to Search:</label>
                <input id="keyword" defaultValue={'" monitor'} className="h-[21px] w-[206px] border border-[#b5cfe7] border-t-[#8fa9c4] bg-white pb-[3px] pl-[3px] outline-none" />
            </div>
            <div className="mt-[5px] flex h-[19px] items-center">
                <label htmlFor="field" className="w-[95px]">Search in Field:</label>
                <span className="relative flex items-center">
                    <select id="field" className="h-[18px] w-[119px] appearance-none border border-[#f8f8f8] bg-linear-to-r from-white from-[102px] to-[#f0f0f0] to-[102px] pl-[3px] outline-none">
                        <option>All</option>
                    </select>
                    <span className="pointer-events-none absolute right-[6px]"><Caret color="#000" /></span>
                </span>
            </div>
            <div className="mt-[10px] flex"><DialogButton primary>Search</DialogButton></div>
            <div className="mt-[10px] min-h-0 flex-1 border border-[#8a8f98] bg-white">
                <table className="w-full table-fixed border-collapse text-left">
                    <colgroup>
                        <col className="w-[163px]" />
                        <col />
                        <col className="w-[17px]" />
                    </colgroup>
                    <thead>
                        <tr className="h-[22px] bg-linear-to-b from-white to-[#f2f2f2]">
                            <th className="bg-[#f6f6f6] p-0 pl-[6px] font-normal">
                                <span className="flex items-center justify-between pr-[5px]">
                                    Product Reference
                                    <svg width="12" height="12" viewBox="0 0 12 12" fill="none" aria-hidden="true">
                                        <path d="M11 1H1 L6 11" stroke="#888" />
                                    </svg>
                                </span>
                            </th>
                            <th className="border-r border-[#e0e0e0] p-0 pl-[6px] font-normal">Product Description</th>
                            <th />
                        </tr>
                    </thead>
                    <tbody>
                        <tr className="h-[18px] text-white">
                            <td className="bg-[#3399ff] p-0 pb-[3px] pl-[3px]">15</td>
                            <td className="bg-[#3399ff] p-0 pb-[3px] pl-[3px]">19" Monitor</td>
                            <td />
                        </tr>
                    </tbody>
                </table>
            </div>
            <div className="mt-[8px] flex justify-end gap-[17px]">
                <DialogButton>Select</DialogButton>
                <DialogButton>Cancel</DialogButton>
            </div>
        </form>
    </div>
);

export default function App() {
    return (
        <div className={clsx('relative flex h-screen flex-col overflow-hidden bg-[#f9f9f9] text-[11px] leading-[15px] text-[#1a1a1a]', UI)}>
            <TitleBar />
            <MenuBar />
            <Toolbars />
            <MainTabs />
            <main className="flex min-h-0 flex-1 border border-r-2 border-[#9a9a9a] bg-[#fafafa] pt-[3px] pr-[2px] pb-[5px] pl-[3px]">
                <ContentTree />
                <ComponentDetails />
            </main>
            <StatusBar />
            <SearchDialog />
        </div>
    );
}
